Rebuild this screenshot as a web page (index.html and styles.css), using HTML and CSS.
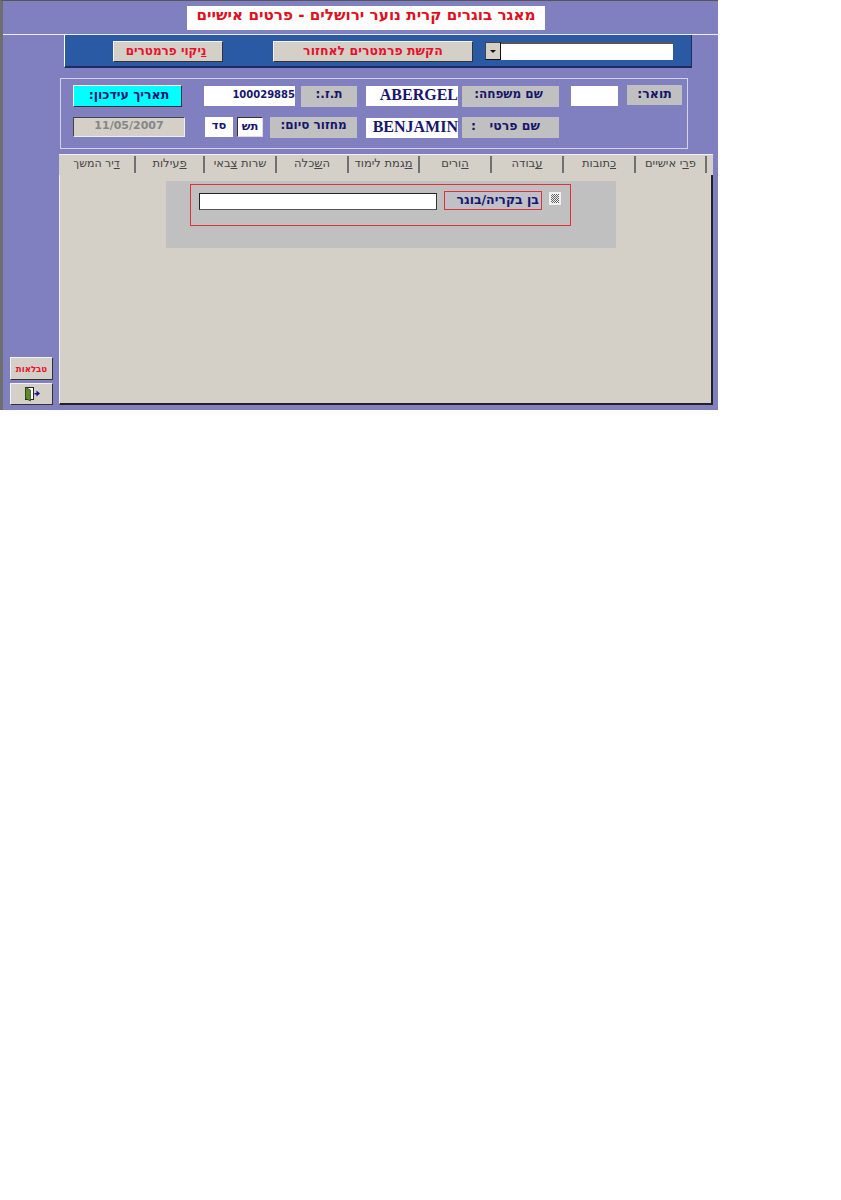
FILE: index.html
```html
<!DOCTYPE html>
<html lang="he">
<head>
<meta charset="utf-8">
<title>מאגר בוגרים</title>
<link rel="stylesheet" href="styles.css">
</head>
<body>
<div class="app">
  <header class="title-row"><h1 class="title" dir="rtl">מאגר בוגרים קרית נוער ירושלים - פרטים אישיים</h1></header>
  <div class="workspace">
    <aside class="side">
      <button class="btn side-tables" dir="rtl">טבלאות</button>
      <button class="btn side-exit" aria-label="יציאה">
        <svg width="18" height="16" viewBox="0 0 18 16"><rect x="2.5" y="1.5" width="8" height="12" fill="#fff" stroke="#222"/><path d="M2.5 1.5l5 2.5v11l-5-2.5z" fill="#5f8a2a" stroke="#2c4410" stroke-width=".7"/><path d="M11.5 7h2V4.500l3.500 3-3.500 3V8.500h-2z" fill="#101090"/></svg>
      </button>
    </aside>
    <main class="main">
      <div class="param-bar">
        <button class="btn red-btn clear-btn" dir="rtl"><span><u>נ</u>יקוי פרמטרים</span></button>
        <button class="btn red-btn req-btn" dir="rtl">הקשת פרמטרים לאחזור</button>
        <div class="combo"><span class="combo-arrow"><i></i></span><span class="combo-input"></span></div>
      </div>
      <section class="info">
        <div class="info-row row-1">
          <button class="btn cyan" dir="rtl">תאריך עידכון:</button>
          <span class="val w-id">100029885</span>
          <span class="lbl w-idl" dir="rtl">ת.ז.:</span>
          <span class="val latin w-name">ABERGEL</span>
          <span class="lbl w-namel" dir="rtl">שם משפחה:</span>
          <span class="val w-toar"></span>
          <span class="lbl w-toarl" dir="rtl">תואר:</span>
        </div>
        <div class="info-row row-2">
          <span class="date-box">11/05/2007</span>
          <span class="val heb w-s1" dir="rtl">סד</span>
          <span class="val heb w-s2" dir="rtl">תש</span>
          <span class="lbl w-cycle" dir="rtl">מחזור סיום:</span>
          <span class="val latin w-name">BENJAMIN</span>
          <span class="lbl w-first" dir="rtl"><span>שם פרטי</span><span class="colon">:</span></span>
        </div>
      </section>
      <nav class="tabs" dir="rtl">
        <span class="tab t1">פ<u>ר</u>י אישיים</span>
        <span class="tab t2"><u>כ</u>תובות</span>
        <span class="tab t3"><u>ע</u>בודה</span>
        <span class="tab t4"><u>ה</u>ורים</span>
        <span class="tab t5"><u>מ</u>גמת לימוד</span>
        <span class="tab t6">ה<u>ש</u>כלה</span>
        <span class="tab t7">שרות <u>צ</u>באי</span>
        <span class="tab t8"><u>פ</u>עילות</span>
        <span class="tab t9 active"><u>ד</u>יר המשך</span>
      </nav>
      <div class="page">
        <div class="section">
          <div class="red-frame">
            <span class="text-input"></span>
            <span class="red-label" dir="rtl">בן בקריה/בוגר</span>
            <span class="check"></span>
          </div>
        </div>
      </div>
    </main>
  </div>
</div>
</body>
</html>
```
FILE: styles.css
```css
html, body { margin: 0; padding: 0; background: #fff; }
body { font-family: "DejaVu Sans", sans-serif; }
.app {
  width: 718px; height: 410px; box-sizing: border-box;
  background: #8080c0;
  border-top: 1px solid #555;
  border-left: 3px solid #6e6e70;
  display: flex; flex-direction: column;
}
.title-row {
  height: 34px; box-sizing: border-box; padding: 5px 0 0 184px;
  border-bottom: 1px solid #eef;
}
.title {
  margin: 0; width: 358px; height: 24px; background: #fff;
  color: #e01020; font-size: 15.2px; line-height: 19px; font-weight: bold;
  text-align: center; box-sizing: border-box; white-space: nowrap; overflow: hidden;
}
.workspace { flex: 1; display: flex; min-height: 0; }
.side {
  width: 56px; box-sizing: border-box; padding: 0 0 5px 7px;
  display: flex; flex-direction: column; justify-content: flex-end; gap: 3px;
}
.btn {
  margin: 0; padding: 0; background: #d4d0c8; font-family: "DejaVu Sans", sans-serif; font-weight: bold;
  border: 1px solid; border-color: #f4f2ee #333 #333 #f4f2ee;
  box-sizing: border-box; display: flex; align-items: center; justify-content: center;
}
.side-tables { width: 43px; height: 23px; color: #e8102a; font-size: 8.600px; }
.side-exit { width: 43px; height: 22px; }
.main { flex: 1; min-width: 0; }
.param-bar {
  margin-left: 5px; width: 628px; height: 33px; box-sizing: border-box;
  background: #2a5aa4; border-bottom: 2px solid #1c2c60; border-right: 1px solid #1c2c60; border-left: 1px solid #fff;
  display: flex; align-items: flex-start; padding: 6px 0 0 48px;
}
.red-btn { color: #e8102a; font-size: 12.5px; height: 21px; padding-bottom: 2px; }
.clear-btn { width: 110px; margin-right: 50px; font-size: 12px; padding-right: 4px; }
.req-btn { width: 200px; margin-right: 12px; }
.combo { width: 188px; height: 18px; margin-top: 1px; display: flex; background: #fff; }
.combo-arrow {
  width: 16px; height: 18px; box-sizing: border-box; background: #d4d0c8;
  border: 1px solid; border-color: #444 #111 #111 #444;
  display: flex; align-items: center; justify-content: center;
}
.combo-arrow i { width: 0; height: 0; border: 3px solid transparent; border-top: 3px solid #111; border-bottom: 0; }
.combo-input { flex: 1; border-top: 2px solid #555; }
.info {
  margin: 10px 0 0 1px; width: 628px; height: 71px; box-sizing: border-box;
  border: 1px solid #d2d2e8;
  padding: 6px 0 0 12px;
  display: flex; flex-direction: column; gap: 9px;
}
.info-row { display: flex; align-items: flex-start; height: 22px; }
.lbl {
  background: #c0c0c0; color: #16166e; font-weight: bold; font-size: 12px;
  height: 21px; line-height: 17px; box-sizing: border-box; text-align: center; display: block; white-space: nowrap;
}
.val {
  background: #fff; color: #16166e; font-weight: bold; height: 20px; box-sizing: border-box;
  font-size: 10px; line-height: 17px; text-align: right; margin-top: 1px; display: block; white-space: nowrap;
}
.latin { font-family: "Liberation Serif", serif; font-size: 16px; line-height: 18px; }
.heb { font-size: 11.5px; text-align: center; }
.cyan { width: 109px; height: 22px; background: #00ffff; color: #16166e; font-size: 12.5px; margin-right: 22px; padding: 0 0 4px 3px; }
.row-1 .w-id { width: 91px; margin-right: 6px; }
.w-idl { width: 56px; margin-right: 9px; margin-top: 1px; }
.w-name { width: 92px; margin-right: 4px; }
.row-1 .lbl.w-namel { width: 97px; margin-right: 12px; margin-top: 1px; padding-right: 4px; }
.w-toar { width: 47px; margin-right: 9px; }
.w-toarl { width: 55px; height: 20px; font-size: 12.5px; }
.row-2 { margin-top: 1px; }
.date-box {
  width: 112px; height: 20px; box-sizing: border-box; background: #d4d0c8; color: #868686; font-weight: bold; font-size: 11px;
  text-align: center; line-height: 15px; display: block;
  border: 1px solid; border-color: #444 #eee #eee #444; margin-right: 20px;
}
.w-s1 { width: 28px; margin-right: 4px; margin-top: 0; }
.w-s2 { width: 26px; margin-right: 7px; margin-top: 0; border: 1px solid; border-color: #333 #ddd #ddd #333; }
.w-cycle { width: 87px; margin-right: 9px; }
.w-first { width: 97px; display: flex; justify-content: space-between; padding: 0 19px 0 9px; font-size: 12.5px; }
.row-2 .w-name { margin-top: 1px; }
.tabs {
  margin: 5px 0 0; width: 654px; height: 21px; box-sizing: border-box; display: flex;
  background: #d4d0c8; border-top: 1px solid #eeeef4;
  font-size: 11.5px; color: #444; font-family: "DejaVu Sans", sans-serif;
}
.tab { display: block; text-align: center; white-space: nowrap; border-left: 2px solid #707070; height: 17px; margin-top: 1px; box-sizing: border-box; line-height: 15px; }
.t1 { width: 73px; margin-right: 6px; border-right: 2px solid #707070; }
.t2, .t3, .t4, .t6, .t7 { width: 72px; }
.t5 { width: 71px; }
.t8 { width: 69px; }
.t9 { width: 75px; border-left: 0; font-size: 11px; }
.active { background: #d4d0c8; }
.page {
  width: 654px; height: 230px; box-sizing: border-box; background: #d4d0c8;
  border-right: 2px solid #222; border-bottom: 2px solid #222; border-left: 1px solid #f4f2ee;
  padding: 6px 0 0 106px;
}
.section { width: 450px; height: 67px; background: #c0c0c0; box-sizing: border-box; padding: 3px 0 0 24px; }
.red-frame {
  width: 381px; height: 42px; box-sizing: border-box; border: 1px solid #e0303a;
  display: flex; align-items: flex-start; padding: 6px 0 0 8px;
}
.text-input {
  width: 238px; height: 17px; box-sizing: border-box; background: #fff; display: block;
  border: 1px solid; border-color: #222 #333 #555 #222; margin: 2px 7px 0 0;
}
.red-label {
  width: 98px; height: 19px; box-sizing: border-box; border: 1px solid #e0303a; display: block;
  color: #16166e; font-weight: bold; font-size: 12.5px; line-height: 15px; white-space: nowrap; padding-right: 2px;
  background: #c0c0c8;
}
.check {
  width: 12px; height: 13px; margin: 1px 0 0 7px; box-sizing: border-box; background-color: #fff;
  border: 2px solid #f0f0f0; display: block;
  background-image: repeating-conic-gradient(#666 0 25%, #eee 0 50%); background-size: 2px 2px;
}
```
